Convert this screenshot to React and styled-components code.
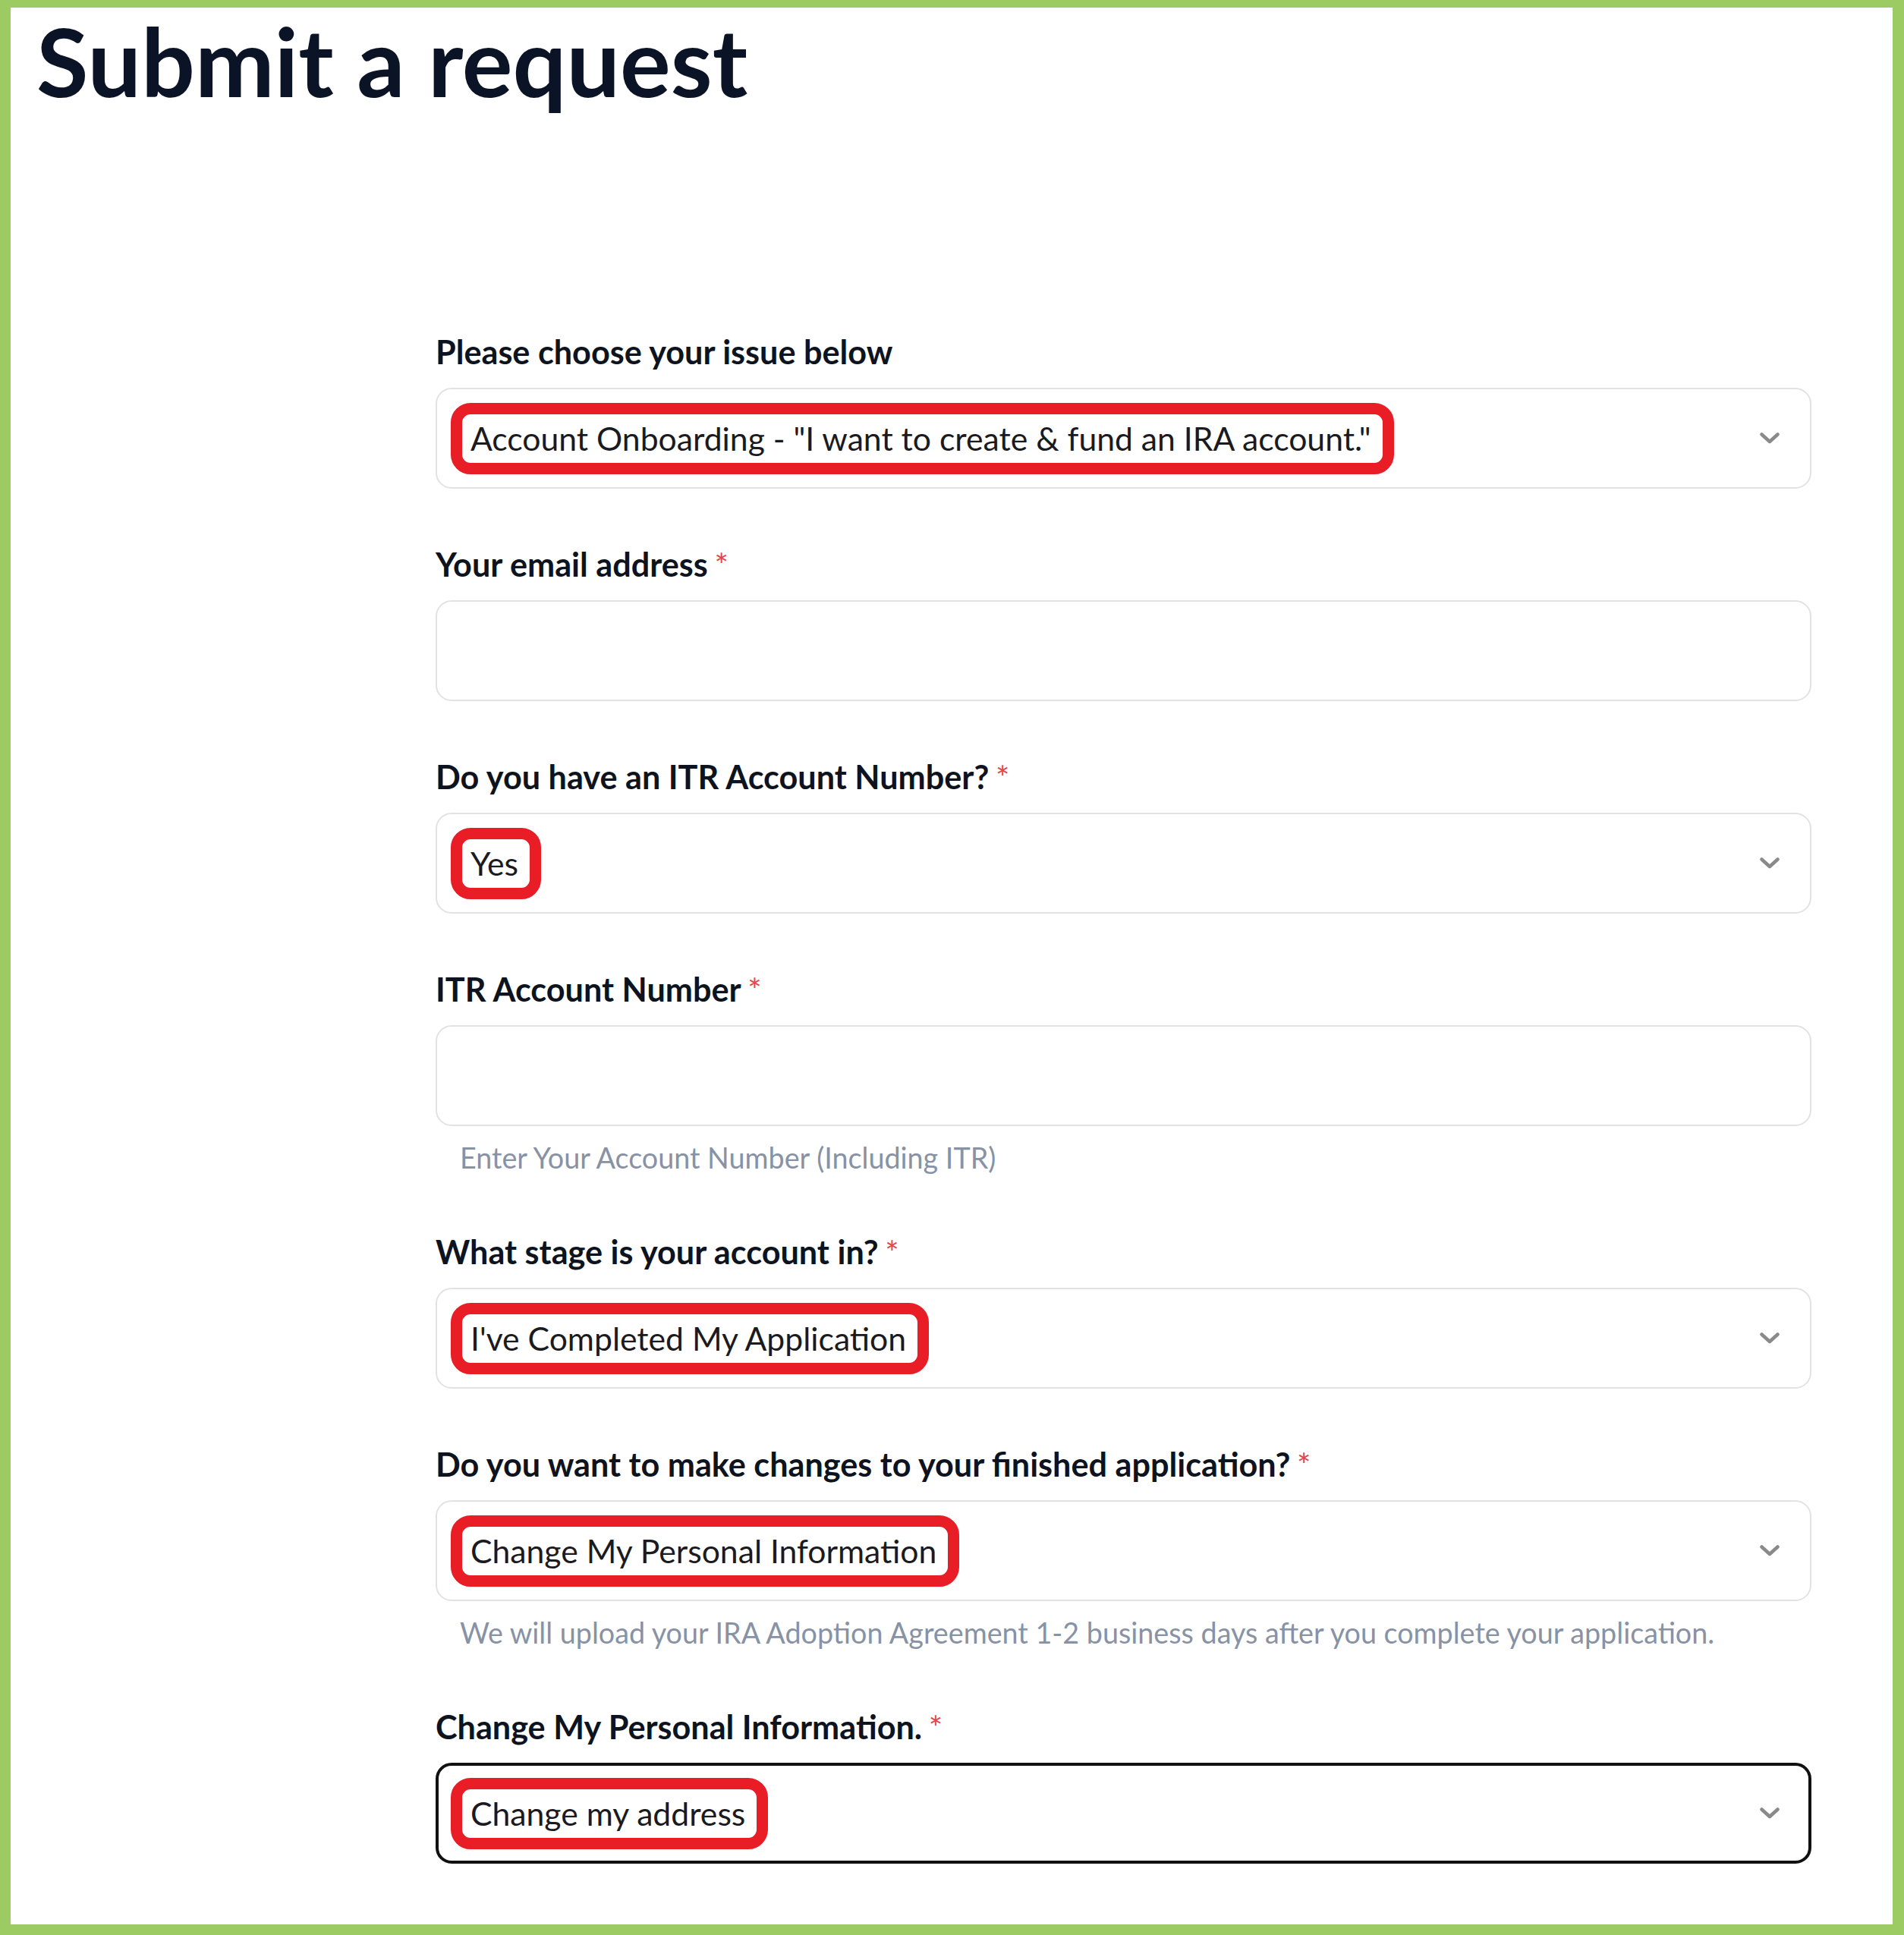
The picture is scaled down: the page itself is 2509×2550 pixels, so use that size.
import React from "react";
import styled, { createGlobalStyle } from "styled-components";

const GlobalStyle = createGlobalStyle`
  html, body { margin: 0; padding: 0; background: #ffffff; }
  body { font-family: Lato, "Open Sans", Arial, sans-serif; }
  * { box-sizing: border-box; }
`;

const Frame = styled.div`
  width: 2509px;
  height: 2550px;
  border-style: solid;
  border-color: #9ccb63;
  border-width: 10px 15px 14px 14px;
  background: #ffffff;
  overflow: hidden;
`;

const Title = styled.h1`
  margin: 6px 0 0 0;
  padding-left: 34px;
  font-family: Lato, sans-serif;
  font-weight: 700;
  font-size: 125px;
  line-height: 128px;
  color: #0b1326;
`;

const Form = styled.form`
  margin: 295px 0 0 560px;
  width: 1813px;
  display: flex;
  flex-direction: column;
`;

const Field = styled.div`
  display: flex;
  flex-direction: column;
  margin-bottom: 75px;
`;

const Label = styled.label`
  display: block;
  font-family: Lato, sans-serif;
  font-weight: 700;
  font-size: 43.2px;
  line-height: 48px;
  color: #0e1320;
  margin-bottom: 24px;
`;

const Required = styled.span`
  color: #e0474c;
  font-weight: 400;
  margin-left: 0.2em;
`;

const Box = styled.div`
  height: 133px;
  border: ${(p) => (p.$focused ? "4px solid #111111" : "2px solid #e2e2e2")};
  border-radius: 21px;
  background: #ffffff;
  display: flex;
  align-items: center;
  justify-content: space-between;
  padding: ${(p) => (p.$focused ? "0 38px 0 16px" : "0 40px 0 18px")};
`;

const ValueMark = styled.span`
  display: inline-block;
  border: 15px solid #e81d25;
  border-radius: 26px;
  padding: 8px 15px 8px 11px;
  font-family: Lato, sans-serif;
  font-weight: 400;
  font-size: 42.7px;
  line-height: 48px;
  color: #1b1b1f;
  white-space: nowrap;
`;

const Hint = styled.div`
  margin-top: 18px;
  padding-left: 32px;
  font-family: Lato, sans-serif;
  font-size: 37.7px;
  line-height: 48px;
  color: #8892a5;
`;

const Chevron = () => (
  <svg width="26" height="15" viewBox="0 0 26 15" aria-hidden="true">
    <path
      d="M2.5 2.5 L13 12 L23.5 2.5"
      fill="none"
      stroke="#8a8a8a"
      strokeWidth="4.5"
      strokeLinecap="round"
      strokeLinejoin="round"
    />
  </svg>
);

const SelectField = ({ label, required, value, hint, focused }) => (
  <Field>
    <Label>
      {label}
      {required && <Required>*</Required>}
    </Label>
    <Box $focused={focused}>
      <ValueMark>{value}</ValueMark>
      <Chevron />
    </Box>
    {hint && <Hint>{hint}</Hint>}
  </Field>
);

const TextField = ({ label, required, hint }) => (
  <Field>
    <Label>
      {label}
      {required && <Required>*</Required>}
    </Label>
    <Box />
    {hint && <Hint>{hint}</Hint>}
  </Field>
);

export default function App() {
  return (
    <>
      <GlobalStyle />
      <Frame>
        <Title>Submit a request</Title>
        <Form onSubmit={(e) => e.preventDefault()}>
          <SelectField
            label="Please choose your issue below"
            value={'Account Onboarding - "I want to create & fund an IRA account."'}
          />
          <TextField label="Your email address" required />
          <SelectField label="Do you have an ITR Account Number?" required value="Yes" />
          <TextField
            label="ITR Account Number"
            required
            hint="Enter Your Account Number (Including ITR)"
          />
          <SelectField
            label="What stage is your account in?"
            required
            value="I've Completed My Application"
          />
          <SelectField
            label="Do you want to make changes to your finished application?"
            required
            value="Change My Personal Information"
            hint="We will upload your IRA Adoption Agreement 1-2 business days after you complete your application."
          />
          <SelectField
            label="Change My Personal Information."
            required
            value="Change my address"
            focused
          />
        </Form>
      </Frame>
    </>
  );
}
